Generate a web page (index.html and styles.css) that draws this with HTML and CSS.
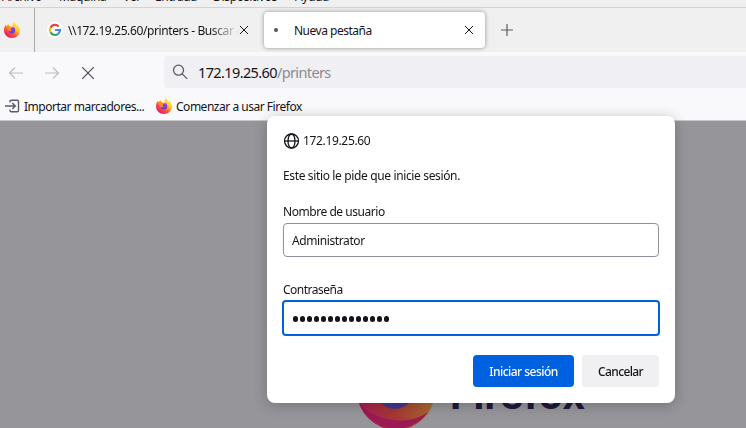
FILE: index.html
```html
<!DOCTYPE html>
<html lang="es">
<head>
<meta charset="utf-8">
<title>Nueva pestaña</title>
<link rel="stylesheet" href="styles.css">
</head>
<body>
<svg class="defs" width="0" height="0" aria-hidden="true">
  <defs>
    <linearGradient id="flame" x1=".85" y1=".1" x2=".2" y2=".95">
      <stop offset="0" stop-color="#fff44f"/><stop offset=".35" stop-color="#ffc02e"/><stop offset=".62" stop-color="#ff5634"/><stop offset="1" stop-color="#e8127c"/>
    </linearGradient>
    <linearGradient id="globe" x1=".7" y1="0" x2=".3" y2="1">
      <stop offset="0" stop-color="#a238e8"/><stop offset="1" stop-color="#5445d9"/>
    </linearGradient>
    <symbol id="firefox" viewBox="0 0 32 32">
      <path fill="url(#flame)" d="M20 0c4 3 5 6 5.500 8 1-1 .8-2.500.5-3.500C29.500 7.500 32 12 32 17c0 8.500-7 15-16 15S0 25.500 0 17C0 13 1 9 4 5.500c0 1 .2 2 1 3C6 7 8 5 10 4c-.5 2 .5 4 2 5h6C16 6 17 2 20 0z"/>
      <circle cx="16" cy="16.500" r="6.500" fill="url(#globe)"/>
      <path fill="#ff8a2e" d="M5 9c3-2 6-1 8 1l4 .5c0 2-3 2.500-4 3.500 0 2 1 3 3 3-2 2-6 2-7 0C7 16 5 13 5 9z"/>
    </symbol>
  </defs>
</svg>
<nav class="menubar">
  <span class="m1">Archivo</span><span class="m2">Máquina</span><span class="m3">Ver</span><span class="m4">Entrada</span><span class="m5">Dispositivos</span><span class="m6">Ayuda</span>
</nav>
<div class="tabs">
  <div class="pinned"><svg width="16" height="16"><use href="#firefox"/></svg></div>
  <div class="tab">
    <svg width="16" height="16" viewBox="0 0 16 16"><circle cx="8" cy="8" r="8" fill="#fff"/>
      <g fill="none" stroke-width="2.200"><path stroke="#ea4335" d="M3.500 5.700A5 5 0 0 1 11.600 4.400"/><path stroke="#fbbc05" d="M3.500 5.700a5 5 0 0 0 0 4.600"/><path stroke="#34a853" d="M3.500 10.300a5 5 0 0 0 7.800 1.400"/><path stroke="#4285f4" d="M11.300 11.700A5 5 0 0 0 13 8H8"/></g></svg>
    <span class="tab-title t-search">\\172.19.25.60/printers - Buscar con Google</span>
    <svg class="close" width="10" height="10" viewBox="0 0 10 10"><path d="M1 1l8 8M9 1L1 9"/></svg>
  </div>
  <div class="tab active">
    <i class="dot"></i>
    <span class="tab-title t-new">Nueva pestaña</span>
    <svg class="close" width="10" height="10" viewBox="0 0 10 10"><path d="M1 1l8 8M9 1L1 9"/></svg>
  </div>
  <svg class="plus" width="12" height="12" viewBox="0 0 12 12"><path d="M6 0v12M0 6h12"/></svg>
</div>
<div class="toolbar">
  <svg class="nav off" width="16" height="16" viewBox="0 0 16 16"><path d="M15 8H1.500M7 2.500L1.500 8 7 13.500"/></svg>
  <svg class="nav off" width="16" height="16" viewBox="0 0 16 16"><path d="M1 8h13.500M9 2.500L14.500 8 9 13.500"/></svg>
  <svg class="nav" width="16" height="16" viewBox="0 0 16 16"><path d="M2.200 2.200l11.600 11.600M13.800 2.200L2.200 13.800"/></svg>
  <div class="urlbar">
    <svg width="16" height="16" viewBox="0 0 16 16"><circle cx="6.500" cy="6.200" r="5"/><path d="M10.200 9.900l5 5"/></svg>
    <span class="url">172.19.25.60<em>/printers</em></span>
  </div>
</div>
<div class="bookmarks">
  <svg class="import" width="16" height="16" viewBox="0 0 16 16"><path d="M5 4.500V3.300Q5 2.200 6.200 2.200H12.200q1.300 0 1.300 1.300v9q0 1.300-1.300 1.300H6.200Q5 13.800 5 12.500v-1M0 8h10M7.300 5L10.300 8l-3 3"/></svg>
  <span class="b-import">Importar marcadores...</span>
  <svg class="bm-fox" width="16" height="16"><use href="#firefox"/></svg>
  <span class="b-start">Comenzar a usar Firefox</span>
</div>
<main class="page">
  <div class="brand">
    <svg width="78" height="78" viewBox="0 0 78 78"><defs><linearGradient id="ring" x1="0" x2="1" y1=".8" y2=".5"><stop offset="0" stop-color="#a71d5c"/><stop offset=".45" stop-color="#a63732"/><stop offset="1" stop-color="#a77430"/></linearGradient></defs>
      <circle cx="39" cy="39" r="39" fill="url(#ring)"/><path d="M2 50c12 19 49 25 69 10A39 39 0 0 1 2 50z" fill="#9b1a55"/><circle cx="38" cy="38" r="19" fill="#45398c"/></svg>
    <span class="wordmark">Firefox</span>
  </div>
  <form class="dialog">
    <header class="host"><svg width="16" height="16" viewBox="0 0 16 16"><circle cx="8.500" cy="8" r="7"/><ellipse cx="8.500" cy="8" rx="3.500" ry="7"/><path d="M1.500 8h14"/></svg><span class="d-host">172.19.25.60</span></header>
    <p class="d-msg">Este sitio le pide que inicie sesión.</p>
    <div class="label d-user">Nombre de usuario</div>
    <div class="field"><span class="d-val">Administrator</span></div>
    <div class="label d-pass">Contraseña</div>
    <div class="field focus"><i></i><i></i><i></i><i></i><i></i><i></i><i></i><i></i><i></i><i></i><i></i><i></i><i></i><i></i></div>
    <div class="actions"><button type="button" class="primary">Iniciar sesión</button><button type="button" class="secondary">Cancelar</button></div>
  </form>
</main>
</body>
</html>
```
FILE: styles.css
```css
* { box-sizing: border-box; }
body { margin: 0; width: 746px; height: 428px; overflow: hidden; background: #f9f9fb; color: #15141a; font: 12px/16px "Noto Sans", "Open Sans", sans-serif; white-space: nowrap; }
svg { display: block; flex: none; fill: none; overflow: visible; }
.defs { position: absolute; }
.menubar { display: flex; height: 8px; background: #f0f0f0; border-bottom: 1px solid #d3d3d3; overflow: hidden; padding-left: 2px; line-height: 16px; }
.menubar span { flex: none; margin-top: -11px; letter-spacing: -.3px; }
.m1 { width: 57px; } .m2 { width: 64px; } .m3 { width: 32px; } .m4 { width: 58px; } .m5 { width: 82px; }
.tabs { display: flex; height: 44px; background: #f0f0f0; align-items: center; }
.pinned { width: 35px; height: 44px; border-right: 1px solid #aaa; padding: 14px 0 0 4px; }
.tab { display: flex; align-items: center; height: 36px; width: 221px; margin-left: 4px; padding: 0 11px 0 8px; }
.tab-title { margin-left: 5px; padding-top: 2px; flex: 1; overflow: hidden; }
.t-search { letter-spacing: -.39px; -webkit-mask-image: linear-gradient(90deg, #000 142px, transparent 171px); mask-image: linear-gradient(90deg, #000 142px, transparent 171px); }
.t-new { margin-left: 16px; letter-spacing: -.5px; }
.active { background: #fff; border-radius: 4px; box-shadow: 0 0 4px rgba(0,0,0,.4); padding-left: 9px; }
.dot { width: 4px; height: 4px; border-radius: 50%; background: #55545a; margin-left: 1px; }
.close { stroke: #15141a; stroke-width: 1; }
.plus { stroke: #5b5b66; stroke-width: 1.200; margin-left: 16px; }
.toolbar { height: 40px; padding: 4px 0 0 8px; display: flex; gap: 20px; align-items: flex-start; }
.nav { margin-top: 9px; stroke: #4b4a55; stroke-width: 1.200; }
.off { stroke: #bdbdc3; }
.urlbar { height: 32px; flex: 1; margin-left: 48px; border-radius: 4px 0 0 4px; background: #f0f0f4; display: flex; align-items: center; padding-left: 8px; gap: 10px; }
.urlbar svg { stroke: #5b5b66; stroke-width: 1.300; }
.url { font-size: 14.5px; letter-spacing: -.62px; }
.url em { font-style: normal; color: #8b8a92; }
.bookmarks { height: 29px; display: flex; align-items: center; padding-left: 5px; border-bottom: 1px solid #c8c8cc; }
.bookmarks span { margin-left: 3px; padding-top: 2px; letter-spacing: -.48px; }
.import { stroke: #5b5b66; stroke-width: 1.400; }
.b-import { width: 132px; }
.bookmarks .b-start { margin-left: 4px; }
.page { height: 307px; background: #96959a; position: relative; overflow: hidden; }
.brand { display: flex; position: absolute; left: 357px; top: 231px; }
.wordmark { font: 700 40px/47px Inter, sans-serif; color: #21183a; margin-left: 15px; margin-top: 19px; }
.dialog { position: fixed; left: 267px; top: 116px; width: 408px; height: 287px; border-radius: 8px; background: #fff; box-shadow: 0 2px 14px rgba(0,0,0,.24); padding: 16px; }
.host { display: flex; height: 18px; align-items: center; gap: 4px; letter-spacing: -.34px; }
.host svg { stroke: #15141a; stroke-width: 1.300; }
.d-msg { margin: 18px 0 0; line-height: 16px; letter-spacing: -.36px; }
.label { height: 16px; }
.d-user { margin-top: 20px; letter-spacing: -.45px; }
.d-pass { margin-top: 25px; letter-spacing: -.5px; }
.field { margin-top: 3px; height: 34px; border: 1px solid #8f8f9d; border-radius: 4px; padding-left: 8px; display: flex; align-items: center; }
.d-val { padding-top: 2px; letter-spacing: -.4px; }
.field.focus { border: 2px solid #0061e0; margin: 2px -1px 0; height: 36px; gap: 1.600px; padding: 2px 0 0 9px; }
.focus i { width: 5.400px; height: 5.400px; background: #15141a; border-radius: 50%; }
.actions { display: flex; justify-content: flex-end; gap: 8px; margin-top: 19px; }
button { border: 0; border-radius: 4px; height: 32px; padding: 2px 0 0; font: 500 12px/16px "Noto Sans", sans-serif; letter-spacing: -.52px; }
.primary { width: 101px; background: #0061e0; color: #fff; }
.secondary { width: 77px; background: #f0f0f2; color: #15141a; letter-spacing: -.65px; }
```
